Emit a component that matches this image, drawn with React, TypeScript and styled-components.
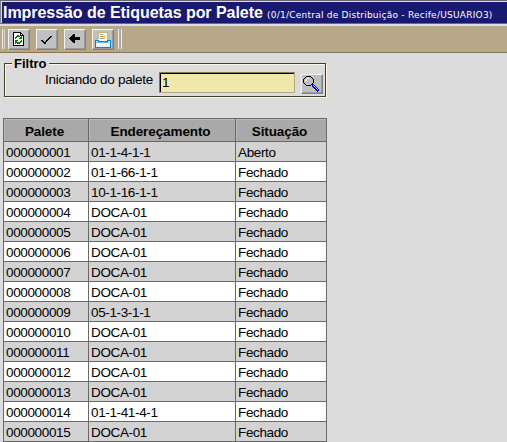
import React from "react";
import styled, { createGlobalStyle } from "styled-components";

const GlobalStyle = createGlobalStyle`
  * { box-sizing: border-box; }
  html, body { margin: 0; height: 100%; overflow: hidden; background: #dcdcdc; }
  body { font-family: "Liberation Sans", Arial, sans-serif; font-size: 13.5px; color: #000; }
`;

const Page = styled.main`
  width: 507px;
  height: 442px;
  overflow: hidden;
  background: #dcdcdc;
`;

const TitleBar = styled.header`
  display: flex;
  height: 24px;
  padding-left: 2px;
  background: #191970;
  color: #fff;
  border-top: 1px solid #696969;
  border-left: 1px solid #808080;
  border-bottom: 1px solid #696977;
  box-shadow: inset 0 1px #dcdcdc, inset 1px 0 #dcdcdc;
  white-space: nowrap;
`;

const Title = styled.h1`
  margin: 0;
  width: 264px;
  flex: none;
  font-size: 16px;
  line-height: 23px;
  letter-spacing: -0.05px;
`;

const Context = styled.span`
  font-family: "DejaVu Sans", Verdana, sans-serif;
  font-size: 9px;
  line-height: 28px;
  letter-spacing: 0.24px;
`;

const Toolbar = styled.nav`
  display: flex;
  align-items: flex-start;
  gap: 6px;
  height: 29px;
  padding: 5px 0 0 2px;
  background: #b8a88a;
  border-top: 2px solid #dcdcdc;
  border-bottom: 1px solid #8b7355;
`;

const Grip = styled.span<{ $end?: boolean }>`
  width: ${(p) => (p.$end ? 4 : 3)}px;
  height: 20px;
  margin: ${(p) => (p.$end ? "-2px 0 0 -2px" : "-2px -3px 0 0")};
  border-left: 1px solid #eee;
  border-right: 1px solid ${(p) => (p.$end ? "#eee" : "#d6d6d6")};
  background: #a9a9b0;
`;

const ToolButton = styled.button`
  display: block;
  flex: none;
  width: 22px;
  height: 21px;
  padding: 0;
  margin-top: -2px;
  background: #c0c0c0;
  border: 1px solid;
  border-color: #f4f4f4 #808080 #808080 #f4f4f4;
  box-shadow: inset -1px -1px #9a9a9a;
  svg { display: block; shape-rendering: crispEdges; }
`;

const Filter = styled.fieldset`
  display: flex;
  align-items: flex-start;
  width: 322px;
  height: 41px;
  margin: 3px 0 0 4px;
  padding: 0;
  min-width: 0;
  border: 1px solid #404030;
  box-shadow: inset 1px 1px #fff8e8, 1px 1px #fff8e8;
`;

const Legend = styled.legend`
  height: 15px;
  margin-left: 7px;
  padding: 0 2px;
  background: #dcdcdc;
  font-size: 13px;
  font-weight: bold;
  line-height: 15px;
`;

const Label = styled.label`
  width: 114px;
  margin: 1px 0 0 40px;
  line-height: 16px;
  letter-spacing: -0.28px;
  white-space: nowrap;
`;

const PaletteInput = styled.input`
  width: 136px;
  height: 21px;
  margin-top: 1px;
  padding: 0 2px;
  background: #eee8aa;
  border: 1px solid;
  border-color: #8b7355 #b8a88a #b8a88a #8b7355;
  box-shadow: inset 1px 1px #000;
  border-radius: 0;
  font: 13.5px "Liberation Sans", Arial, sans-serif;
  outline: none;
`;

const SearchButton = styled(ToolButton)`
  height: 20px;
  margin: 3px 0 0 6px;
`;

const Table = styled.table`
  width: 324px;
  margin: 21px 0 0 3px;
  table-layout: fixed;
  border-collapse: collapse;
`;

const Column = styled.col<{ $width: number }>`
  width: ${(p) => p.$width}px;
`;

const HeadCell = styled.th`
  height: 23px;
  padding: 3px 3px 0 0;
  background: #a9a9a9;
  border: 1px solid #696969;
  box-shadow: inset 1px 1px #b9b9b9;
  font-size: 13.5px;
  line-height: 16px;
  letter-spacing: -0.1px;
`;

const Row = styled.tr`
  height: 20px;
  background: #d3d3d3;
  &:nth-child(even) { background: #fff; }
`;

const Cell = styled.td`
  height: 20px;
  padding: 2px 0 0 2px;
  border: 1px solid #696969;
  line-height: 16px;
  letter-spacing: -0.36px;
  white-space: nowrap;
`;

const RefreshIcon = () => (
  <svg width="20" height="19" viewBox="0 0 20 19">
    <path d="M4 2h8v1h1v1h1v1h1v11H4z" fill="#000" />
    <path d="M5 3h6v3h3v9H5zM12 4h1v1h-1z" fill="#fff" />
    <path d="M8 5h2v1h1v1h1V6h1v3h-3V8h1V7H8v1H7v1H6V7h1V6h1zM6 10h3v1H8v1h3v-1h1v-1h1v2h-1v1h-1v1H8v-1H7v1H6z" fill="#008000" />
  </svg>
);
const CheckIcon = () => (
  <svg width="20" height="19" viewBox="0 0 20 19">
    <path d="M4 10h2v1h1v1h1v-1h1v-1h1V9h1V8h1V7h1V6h2v1h-1v1h-1v1h-1v1h-1v1h-1v1h-1v1H9v1H7v-1H6v-1H5v-1H4z" fill="#000" />
  </svg>
);
const BackIcon = () => (
  <svg width="20" height="19" viewBox="0 0 20 19">
    <path d="M4 8h1V7h1V6h1V5h1V4h2v3h5v3h-5v3H8v-1H7v-1H6v-1H5V9H4z" fill="#000" />
  </svg>
);
const PrintIcon = () => (
  <svg width="20" height="19" viewBox="0 0 20 19">
    <path d="M5 2h9v9H5z" fill="#fff8d5" />
    <path d="M5 2h9M14 2v8M5 2v7" stroke="#c5b783" />
    <path d="M7 4h3v1H7zM7 6h5v1H7zM7 8h5v1H7z" fill="#b8a880" />
    <path d="M2 10h3v1h9v-1h3v7H2z" fill="#e5f4ff" stroke="#0085df" />
    <path d="M3 12h13v1H3z" fill="#79b8df" />
    <path d="M12 11h3v1h-3z" fill="#e72912" />
    <path d="M4 14h10v1H4z" fill="#fff" />
  </svg>
);
const SearchIcon = () => (
  <svg width="20" height="18" viewBox="0 0 20 18">
    <path d="M4 1h5v1h1v1h1v1h1v4h-1v1h-1v1H9v1H4v-1H3V9H2V8H1V4h1V3h1V2h1z" fill="#000" />
    <path d="M4 2h5v1h1v1h1v4h-1v1H9v1H4V9H3V8H2V4h1V3h1z" fill="#c0c0c0" />
    <path d="M4 4h1V3h2v1H5v2H3V5h1z" fill="#fff" />
    <path d="M9 9h3v1h1v1h1v1h1v1h1v1h1v2h-1v1h-1v-1h-1v-1h-1v-1h-1v-1h-1v-1h-1v-2H9z" fill="#00f" />
    <path d="M11 10h1v1h-1zM12 11h1v1h-1zM13 12h1v1h-1zM14 13h1v1h-1zM15 14h1v1h-1z" fill="#c0c0ff" />
    <path d="M9 9h1v1H9zM10 10h1v1h-1z" fill="#000" />
  </svg>
);

const rows = [
  ["000000001", "01-1-4-1-1", "Aberto"],
  ["000000002", "01-1-66-1-1", "Fechado"],
  ["000000003", "10-1-16-1-1", "Fechado"],
  ["000000004", "DOCA-01", "Fechado"],
  ["000000005", "DOCA-01", "Fechado"],
  ["000000006", "DOCA-01", "Fechado"],
  ["000000007", "DOCA-01", "Fechado"],
  ["000000008", "DOCA-01", "Fechado"],
  ["000000009", "05-1-3-1-1", "Fechado"],
  ["000000010", "DOCA-01", "Fechado"],
  ["000000011", "DOCA-01", "Fechado"],
  ["000000012", "DOCA-01", "Fechado"],
  ["000000013", "DOCA-01", "Fechado"],
  ["000000014", "01-1-41-4-1", "Fechado"],
  ["000000015", "DOCA-01", "Fechado"],
];

export default function App() {
  return (
    <>
      <GlobalStyle />
      <Page>
        <TitleBar>
          <Title>Impressão de Etiquetas por Palete</Title>
          <Context>(0/1/Central de Distribuição - Recife/USUARIO3)</Context>
        </TitleBar>
        <Toolbar>
          <Grip />
          <ToolButton aria-label="Atualizar"><RefreshIcon /></ToolButton>
          <ToolButton aria-label="Confirmar"><CheckIcon /></ToolButton>
          <ToolButton aria-label="Voltar"><BackIcon /></ToolButton>
          <ToolButton aria-label="Imprimir"><PrintIcon /></ToolButton>
          <Grip $end />
        </Toolbar>
        <Filter>
          <Legend>Filtro</Legend>
          <Label htmlFor="palete">Iniciando do palete</Label>
          <PaletteInput id="palete" defaultValue="1" />
          <SearchButton aria-label="Pesquisar"><SearchIcon /></SearchButton>
        </Filter>
        <Table>
          <colgroup><Column $width={85} /><Column $width={147} /><Column $width={91} /></colgroup>
          <thead>
            <tr><HeadCell>Palete</HeadCell><HeadCell>Endereçamento</HeadCell><HeadCell>Situação</HeadCell></tr>
          </thead>
          <tbody>
            {rows.map(([id, address, status]) => (
              <Row key={id}><Cell>{id}</Cell><Cell>{address}</Cell><Cell>{status}</Cell></Row>
            ))}
          </tbody>
        </Table>
      </Page>
    </>
  );
}
